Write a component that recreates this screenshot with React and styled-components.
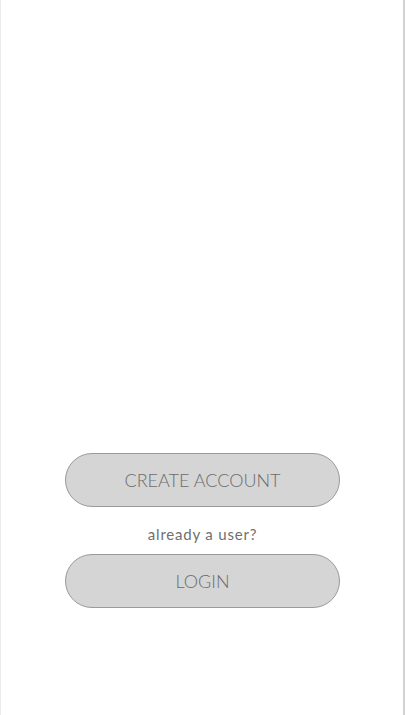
import styled, { createGlobalStyle } from "styled-components"

const Global = createGlobalStyle`
    html, body {
        margin: 0;
        padding: 0;
        background: #ffffff;
    }
    * {
        box-sizing: border-box;
    }
`

const Screen = styled.main`
    width: 405px;
    height: 715px;
    background: #ffffff;
    border-left: 1px solid #ececec;
    border-right: 3px solid #ffffff;
    position: relative;
    display: flex;
    flex-direction: column;
    justify-content: flex-end;
    align-items: center;
    padding: 0 0 107px 0;
    font-family: Lato, "Open Sans", sans-serif;
    &::after {
        content: "";
        position: absolute;
        top: 0;
        bottom: 0;
        right: -3px;
        width: 2px;
        background: #d2d2d2;
    }
`

const Actions = styled.div`
    display: flex;
    flex-direction: column;
    align-items: center;
    margin-left: 2px;
`

const PillButton = styled.button`
    width: 275px;
    height: 54px;
    border-radius: 27px;
    border: 1px solid #9a9a9a;
    background: #d5d5d5;
    color: #6c6c6c;
    font-family: Lato, "Open Sans", sans-serif;
    font-size: 18px;
    font-weight: 300;
    letter-spacing: 0;
    display: flex;
    align-items: center;
    justify-content: center;
    padding: 0;
    cursor: pointer;
`

const Hint = styled.p`
    margin: 0;
    height: 47px;
    display: flex;
    align-items: center;
    padding-top: 6px;
    font-size: 15px;
    color: #6f6f6f;
    letter-spacing: 0.8px;
`

function App() {
    return (
        <>
            <Global />
            <Screen>
                <Actions>
                    <PillButton>CREATE ACCOUNT</PillButton>
                    <Hint>already a user?</Hint>
                    <PillButton>LOGIN</PillButton>
                </Actions>
            </Screen>
        </>
    )
}

export default App
